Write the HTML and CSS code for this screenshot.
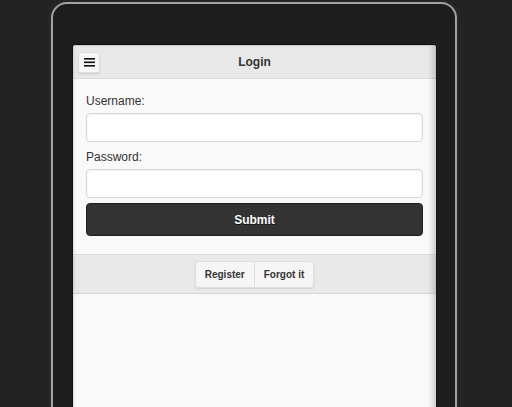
FILE: index.html
```html
<!DOCTYPE html>
<html>
<head>
<meta charset="utf-8">
<link rel="stylesheet" href="styles.css">
</head>
<body>
<div class="device">
  <div class="screen">
    <header class="bar">
      <button class="menu-btn" aria-label="Menu">
        <svg width="11" height="9" viewBox="0 0 11 9"><rect x="0" y="0" width="11" height="1.6" fill="#111"/><rect x="0" y="3.5" width="11" height="1.6" fill="#111"/><rect x="0" y="7" width="11" height="1.6" fill="#111"/></svg>
      </button>
      <h1 class="title">Login</h1>
    </header>
    <main class="content">
      <label class="label">Username:</label>
      <input class="field" type="text">
      <label class="label label-second">Password:</label>
      <input class="field" type="password">
      <button class="submit">Submit</button>
    </main>
    <footer class="footer">
      <div class="group">
        <a class="gbtn">Register</a>
        <a class="gbtn">Forgot it</a>
      </div>
    </footer>
    <div class="rest"></div>
  </div>
</div>
</body>
</html>
```
FILE: styles.css
```css
html, body {
  margin: 0;
  height: 100%;
  overflow: hidden;
}
body {
  background: #232323;
  font-family: "Liberation Sans", Arial, sans-serif;
  padding: 2px 0 0 51px;
  box-sizing: border-box;
}
.device {
  width: 406px;
  height: 460px;
  box-sizing: border-box;
  border: 2px solid #a2a2a2;
  border-radius: 16px;
  background: #1d1d1d;
  padding: 41px 19px 0 20px;
  box-shadow: 0 0 6px rgba(255,255,255,0.06);
}
.screen {
  position: relative;
  background: #f9f9f9;
  border-radius: 3px 3px 0 0;
  height: 420px;
  display: flex;
  flex-direction: column;
  box-shadow: 0 0 0 1px #111;
  overflow: hidden;
}
.screen::after {
  content: "";
  position: absolute;
  inset: 0;
  pointer-events: none;
  box-shadow: inset -7px 0 6px -4px rgba(0,0,0,0.2), inset 3px 0 3px -2px rgba(0,0,0,0.12);
}
.bar {
  position: relative;
  height: 34px;
  background: #e9e9e9;
  border-top: 1px solid #cfcfcf;
  border-bottom: 1px solid #dcdcdc;
  display: flex;
  align-items: center;
  justify-content: center;
  box-sizing: border-box;
}
.menu-btn {
  position: absolute;
  left: 5px;
  top: 6px;
  width: 22px;
  height: 21px;
  padding: 0;
  border: 1px solid #dedede;
  border-radius: 3px;
  background: #f6f6f6;
  box-shadow: 0 1px 2px rgba(0,0,0,0.12);
  display: flex;
  align-items: center;
  justify-content: center;
}
.title {
  margin: 0;
  font-size: 12px;
  font-weight: bold;
  color: #333;
}
.content {
  padding: 15px 13px 18px;
  display: flex;
  flex-direction: column;
}
.label {
  font-size: 12px;
  line-height: 15px;
  color: #333;
  margin-bottom: 4px;
}
.label-second {
  margin-top: 8px;
}
.field {
  height: 29px;
  box-sizing: border-box;
  border: 1px solid #d6d6d6;
  border-radius: 4px;
  background: #fff;
  box-shadow: inset 0 1px 2px rgba(0,0,0,0.06);
  margin: 0;
}
.submit {
  margin-top: 5px;
  height: 33px;
  border: 1px solid #1f1f1f;
  border-radius: 4px;
  background: #333;
  color: #fff;
  font-family: "Liberation Sans", Arial, sans-serif;
  font-size: 12px;
  font-weight: bold;
  text-shadow: 0 1px 0 #111;
}
.footer {
  height: 40px;
  box-sizing: border-box;
  background: #e9e9e9;
  border-top: 1px solid #dddddd;
  border-bottom: 1px solid #d6d6d6;
  display: flex;
  align-items: center;
  justify-content: center;
}
.group {
  display: flex;
  border-radius: 3px;
  box-shadow: 0 1px 2px rgba(0,0,0,0.1);
}
.gbtn {
  height: 25px;
  line-height: 25px;
  padding: 0 9px;
  background: #f6f6f6;
  border: 1px solid #dedede;
  font-size: 10px;
  font-weight: bold;
  color: #333;
}
.gbtn:first-child {
  border-radius: 3px 0 0 3px;
  border-right: none;
}
.gbtn:last-child {
  border-radius: 0 3px 3px 0;
}
.rest {
  flex: 1;
  background: #f9f9f9;
}
```
